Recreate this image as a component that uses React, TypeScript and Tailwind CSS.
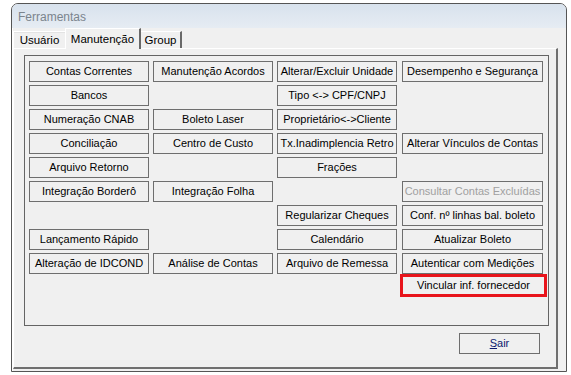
import React from 'react';

type Cell = { label: string; disabled?: boolean; marked?: boolean } | null;

const rows: Cell[][] = [
  [{ label: 'Contas Correntes' }, { label: 'Manutenção Acordos' }, { label: 'Alterar/Excluir Unidade' }, { label: 'Desempenho e Segurança' }],
  [{ label: 'Bancos' }, null, { label: 'Tipo <-> CPF/CNPJ' }, null],
  [{ label: 'Numeração CNAB' }, { label: 'Boleto Laser' }, { label: 'Proprietário<->Cliente' }, null],
  [{ label: 'Conciliação' }, { label: 'Centro de Custo' }, { label: 'Tx.Inadimplencia Retro' }, { label: 'Alterar Vínculos de Contas' }],
  [{ label: 'Arquivo Retorno' }, null, { label: 'Frações' }, null],
  [{ label: 'Integração Borderô' }, { label: 'Integração Folha' }, null, { label: 'Consultar Contas Excluídas', disabled: true }],
  [null, null, { label: 'Regularizar Cheques' }, { label: 'Conf. nº linhas bal. boleto' }],
  [{ label: 'Lançamento Rápido' }, null, { label: 'Calendário' }, { label: 'Atualizar Boleto' }],
  [{ label: 'Alteração de IDCOND' }, { label: 'Análise de Contas' }, { label: 'Arquivo de Remessa' }, { label: 'Autenticar com Medições' }],
  [null, null, null, { label: 'Vincular inf. fornecedor', marked: true }],
];

const ToolButton: React.FC<{ cell: Cell; col: number }> = ({ cell, col }) => {
  if (!cell) return <div className="h-[21px]" />;
  if (cell.marked) {
    // highlighted item, red annotation box
    return (
      <div className="-ml-[1px] -mt-[3px] w-[147px] h-[23px] border-[3px] border-[#e8141b] flex items-center justify-center text-black">
        {cell.label}
      </div>
    );
  }
  return (
    <button
      className={`h-[21px] border border-[#6e6e6e] bg-[#f0f0f0] flex items-center justify-center whitespace-nowrap ${
        col === 3 ? 'ml-[1px]' : ''
      } ${cell.disabled ? 'text-[#a0a0a0]' : 'text-black'}`}
    >
      {cell.label}
    </button>
  );
};

export default function App() {
  return (
    <div className="w-[571px] h-[375px] bg-white overflow-hidden font-['Liberation_Sans',Arial,sans-serif] text-[11px] pt-[3px] pl-[11px]">
      <div className="w-[556px] h-[369px] border border-[#555] rounded-t-[7px] bg-[#f0f0f0] flex flex-col shadow-[inset_1px_0_0_#fff]">
        {/* Title bar */}
        <div className="h-[24px] rounded-t-[6px] bg-gradient-to-b from-[#d8e2ed] to-[#e6ecf3] flex items-center pl-[6px] pt-[1px] text-[12px] text-[#7b848d]">
          Ferramentas
        </div>

        {/* Tabs */}
        <div className="h-[20px] flex items-end pl-[1px] text-[11.5px] text-black">
          <div className="w-[52px] h-[17px] border-t border-l border-white shadow-[inset_0_1px_0_#e3e3e3] flex items-center justify-center pt-[1px]">
            Usuário
          </div>
          <div className="w-[76px] h-[21px] -mb-[1px] relative z-10 bg-[#f0f0f0] border-t border-l border-white border-r-2 border-r-[#696969] flex items-start justify-center pt-[2px]">
            Manutenção
          </div>
          <div className="w-[41px] h-[17px] border-t border-white border-r-2 border-r-[#696969] flex items-center justify-center pt-[1px]">
            Group
          </div>
        </div>

        {/* Tab page */}
        <div className="ml-[1px] w-[545px] h-[321px] border-t border-l border-white border-r-2 border-b-2 border-r-[#6f6f6f] border-b-[#6f6f6f] flex flex-col">
          <div className="ml-[10px] mt-[6px] w-[525px] h-[271px] border border-[#646464] pl-[4px] pt-[5px]">
            <div className="grid grid-cols-[120px_120px_120px_142px] gap-x-[4px] gap-y-[3px]">
              {rows.map((row, r) =>
                row.map((cell, c) => <ToolButton key={`${r}-${c}`} cell={cell} col={c} />)
              )}
            </div>
          </div>

          <div className="flex justify-end pr-[16px] mt-[7px]">
            <button className="w-[81px] h-[21px] border border-[#6e6e6e] bg-[#f0f0f0] flex items-center justify-center text-[#0d1a6e]">
              <span>
                <span className="underline">S</span>air
              </span>
            </button>
          </div>
        </div>
      </div>
    </div>
  );
}
